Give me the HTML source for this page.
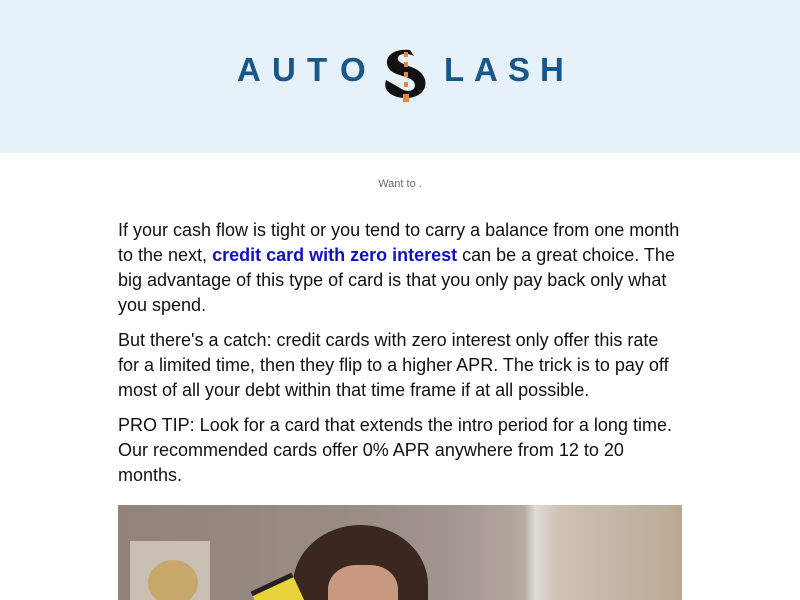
<!DOCTYPE html>
<html><head><meta charset="utf-8"><style>
html,body{margin:0;height:600px;overflow:hidden;}
body{background:#fff;font-family:"Liberation Sans",Arial,sans-serif;}
.hdr{height:153px;background:#e6f1fa;position:relative;}
.l{position:absolute;top:53px;font-weight:bold;font-size:33px;color:#17578a;line-height:33px;}
.pre{text-align:center;font-size:11px;color:#666;margin-top:25px;height:14px;}
.c{width:564px;margin:26px 0 0 118px;font-size:18px;line-height:25px;color:#111;}
.c p{margin:0 0 10px 0;}
.c a{color:#1010c8;font-weight:bold;text-decoration:none;}
.img{position:absolute;left:118px;top:505px;width:564px;height:95px;overflow:hidden;background:linear-gradient(90deg,#8f837c 0%,#988c85 40%,#a29690 60%,#b5aaa2 72%,#e0dcd6 74%,#cfc2b4 78%,#b9a994 100%);}
</style></head><body>
<div class="hdr">
<span class="l" style="left:237px">A</span>
<span class="l" style="left:272px">U</span>
<span class="l" style="left:307px">T</span>
<span class="l" style="left:340px">O</span>
<svg style="position:absolute;left:380px;top:48px" width="52" height="56" viewBox="0 0 52 56">
<path d="M30 2 C10 0 2 12 10 22 C16 28 30 28 34 34 C38 42 28 46 20 40 L6 32 C2 44 14 50 26 50 C44 50 50 36 42 26 C36 18 22 18 18 12 C16 6 26 4 34 8 Z" fill="#111"/>
<rect x="24" y="4" width="4" height="5" fill="#e38a3a"/><rect x="24" y="14" width="4" height="5" fill="#e38a3a"/><rect x="24" y="24" width="4" height="5" fill="#e38a3a"/><rect x="24" y="34" width="4" height="5" fill="#e38a3a"/><rect x="23" y="46" width="6" height="8" fill="#e38a3a"/>
</svg>
<span class="l" style="left:444px">L</span>
<span class="l" style="left:474px">A</span>
<span class="l" style="left:508px">S</span>
<span class="l" style="left:540px">H</span>
</div>
<div class="pre">Want to .</div>
<div class="c">
<p>If your cash flow is tight or you tend to carry a balance from one month to the next, <a>credit card with zero interest</a> can be a great choice. The big advantage of this type of card is that you only pay back only what you spend.</p>
<p>But there's a catch: credit cards with zero interest only offer this rate for a limited time, then they flip to a higher APR. The trick is to pay off most of all your debt within that time frame if at all possible.</p>
<p>PRO TIP: Look for a card that extends the intro period for a long time. Our recommended cards offer 0% APR anywhere from 12 to 20 months.</p>
</div>
<div class="img">
<div style="position:absolute;left:12px;top:36px;width:80px;height:70px;background:#c9bfb4;"></div>
<div style="position:absolute;left:30px;top:55px;width:50px;height:45px;border-radius:50%;background:#c8a86a;"></div>
<div style="position:absolute;left:175px;top:20px;width:135px;height:120px;border-radius:50% 50% 0 0;background:#3a2820;"></div>
<div style="position:absolute;left:210px;top:60px;width:70px;height:60px;border-radius:40% 40% 0 0;background:#c79a80;"></div>
<div style="position:absolute;left:140px;top:75px;width:45px;height:40px;background:#e8d43a;transform:rotate(-25deg);border-top:5px solid #222;"></div>
</div>
</body></html>
